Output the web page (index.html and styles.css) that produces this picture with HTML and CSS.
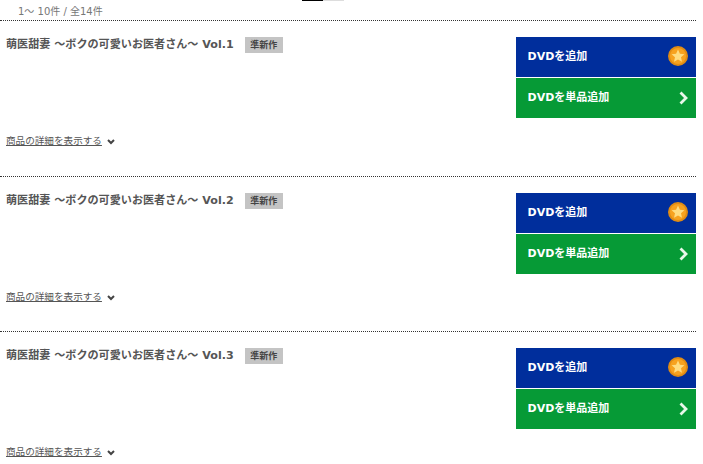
FILE: index.html
```html
<!DOCTYPE html>
<html lang="ja">
  <head>
    <meta charset="UTF-8" />
    <title>DVD</title>
    <link rel="stylesheet" href="styles.css">
  </head>
  <body>
    <div class="pager-tabs"><span class="tab-on"></span><span class="tab-off"></span></div>
    <p class="count">1～ 10件 / 全14件</p>

    <div class="item">
      <div class="item-main">
        <div class="item-head">
          <h2>萌医甜妻 ～ボクの可愛いお医者さん～ Vol.1</h2>
          <span class="badge">準新作</span>
        </div>
        <div class="detail">
          <a href="#">商品の詳細を表示する</a>
          <svg class="caret" width="8" height="6" viewBox="0 0 8 6"><path d="M1 1l3 3 3-3" fill="none" stroke="#444" stroke-width="2"/></svg>
        </div>
      </div>
      <div class="buttons">
        <a class="btn btn-blue" href="#">DVDを追加
          <svg class="star" width="20" height="20" viewBox="0 0 20 20"><circle cx="10" cy="10" r="10" fill="#e08c14"/><circle cx="10" cy="10" r="8" fill="#f7a21f"/><path d="M10 3.500l1.900 4.200 4.500.5-3.400 3 1 4.500-4-2.300-4 2.300 1-4.500-3.400-3 4.500-.5z" fill="#ffdc80"/></svg>
        </a>
        <a class="btn btn-green" href="#">DVDを単品追加
          <svg class="arrow" width="9" height="14" viewBox="0 0 9 14"><path d="M1.500 1.500L7 7l-5.500 5.500" fill="none" stroke="#e8f8ea" stroke-width="2.800"/></svg>
        </a>
      </div>
    </div>

    <div class="item">
      <div class="item-main">
        <div class="item-head">
          <h2>萌医甜妻 ～ボクの可愛いお医者さん～ Vol.2</h2>
          <span class="badge">準新作</span>
        </div>
        <div class="detail">
          <a href="#">商品の詳細を表示する</a>
          <svg class="caret" width="8" height="6" viewBox="0 0 8 6"><path d="M1 1l3 3 3-3" fill="none" stroke="#444" stroke-width="2"/></svg>
        </div>
      </div>
      <div class="buttons">
        <a class="btn btn-blue" href="#">DVDを追加
          <svg class="star" width="20" height="20" viewBox="0 0 20 20"><circle cx="10" cy="10" r="10" fill="#e08c14"/><circle cx="10" cy="10" r="8" fill="#f7a21f"/><path d="M10 3.500l1.900 4.200 4.500.5-3.400 3 1 4.500-4-2.300-4 2.300 1-4.500-3.400-3 4.500-.5z" fill="#ffdc80"/></svg>
        </a>
        <a class="btn btn-green" href="#">DVDを単品追加
          <svg class="arrow" width="9" height="14" viewBox="0 0 9 14"><path d="M1.500 1.500L7 7l-5.500 5.500" fill="none" stroke="#e8f8ea" stroke-width="2.800"/></svg>
        </a>
      </div>
    </div>

    <div class="item">
      <div class="item-main">
        <div class="item-head">
          <h2>萌医甜妻 ～ボクの可愛いお医者さん～ Vol.3</h2>
          <span class="badge">準新作</span>
        </div>
        <div class="detail">
          <a href="#">商品の詳細を表示する</a>
          <svg class="caret" width="8" height="6" viewBox="0 0 8 6"><path d="M1 1l3 3 3-3" fill="none" stroke="#444" stroke-width="2"/></svg>
        </div>
      </div>
      <div class="buttons">
        <a class="btn btn-blue" href="#">DVDを追加
          <svg class="star" width="20" height="20" viewBox="0 0 20 20"><circle cx="10" cy="10" r="10" fill="#e08c14"/><circle cx="10" cy="10" r="8" fill="#f7a21f"/><path d="M10 3.500l1.900 4.200 4.500.5-3.400 3 1 4.500-4-2.300-4 2.300 1-4.500-3.400-3 4.500-.5z" fill="#ffdc80"/></svg>
        </a>
        <a class="btn btn-green" href="#">DVDを単品追加
          <svg class="arrow" width="9" height="14" viewBox="0 0 9 14"><path d="M1.500 1.500L7 7l-5.500 5.500" fill="none" stroke="#e8f8ea" stroke-width="2.800"/></svg>
        </a>
      </div>
    </div>
  </body>
</html>
```

FILE: styles.css
```css
html,
body {
  height: 464px;
  overflow: hidden;
}

body {
  margin: 0;
  background-color: white;
  color: #555;
  font-family: "DejaVu Sans", "Noto Sans CJK JP", sans-serif;
}

.pager-tabs {
  display: flex;
  height: 1px;
  padding-left: 302px;
}

.tab-on {
  width: 21px;
  background-color: #000;
}

.tab-off {
  width: 21px;
  background-color: #ddd;
}

.count {
  margin: 0;
  height: 19px;
  padding-left: 18px;
  font-size: 10px;
  line-height: 22px;
  color: #777;
}

.item {
  display: flex;
  justify-content: space-between;
  height: 155.500px;
  padding: 16px 0 0 6px;
  box-sizing: border-box;
  border-top: 1px dotted #333;
  width: 696px;
}

.item-main {
  display: flex;
  flex-direction: column;
}

.item-head {
  display: flex;
  align-items: flex-start;
  gap: 11px;
}

.item-head h2 {
  margin: 0;
  font-size: 11.100px;
  line-height: 16px;
  font-weight: bold;
  color: #555;
}

.badge {
  padding: 0 5.500px;
  height: 16px;
  background-color: #c4c4c4;
  color: #444;
  font-size: 9px;
  font-weight: bold;
  line-height: 16px;
}

.detail {
  display: flex;
  align-items: center;
  gap: 5px;
  margin-top: 80px;
  font-size: 9.600px;
  line-height: 16px;
}

.detail a {
  color: #555;
  text-decoration: underline;
}

.caret {
  margin-top: 2px;
}

.buttons {
  display: flex;
  flex-direction: column;
  gap: 1px;
  width: 180px;
}

.btn {
  display: flex;
  align-items: center;
  justify-content: space-between;
  height: 40px;
  box-sizing: border-box;
  padding: 0 8px 4px 11.500px;
  color: white;
  font-size: 11px;
  font-weight: bold;
  text-decoration: none;
}

.btn-blue {
  background-color: #002e9c;
}

.btn-green {
  background-color: #069a36;
}

.star {
  margin-top: 2px;
}

.arrow {
  margin-top: 4px;
}
```
